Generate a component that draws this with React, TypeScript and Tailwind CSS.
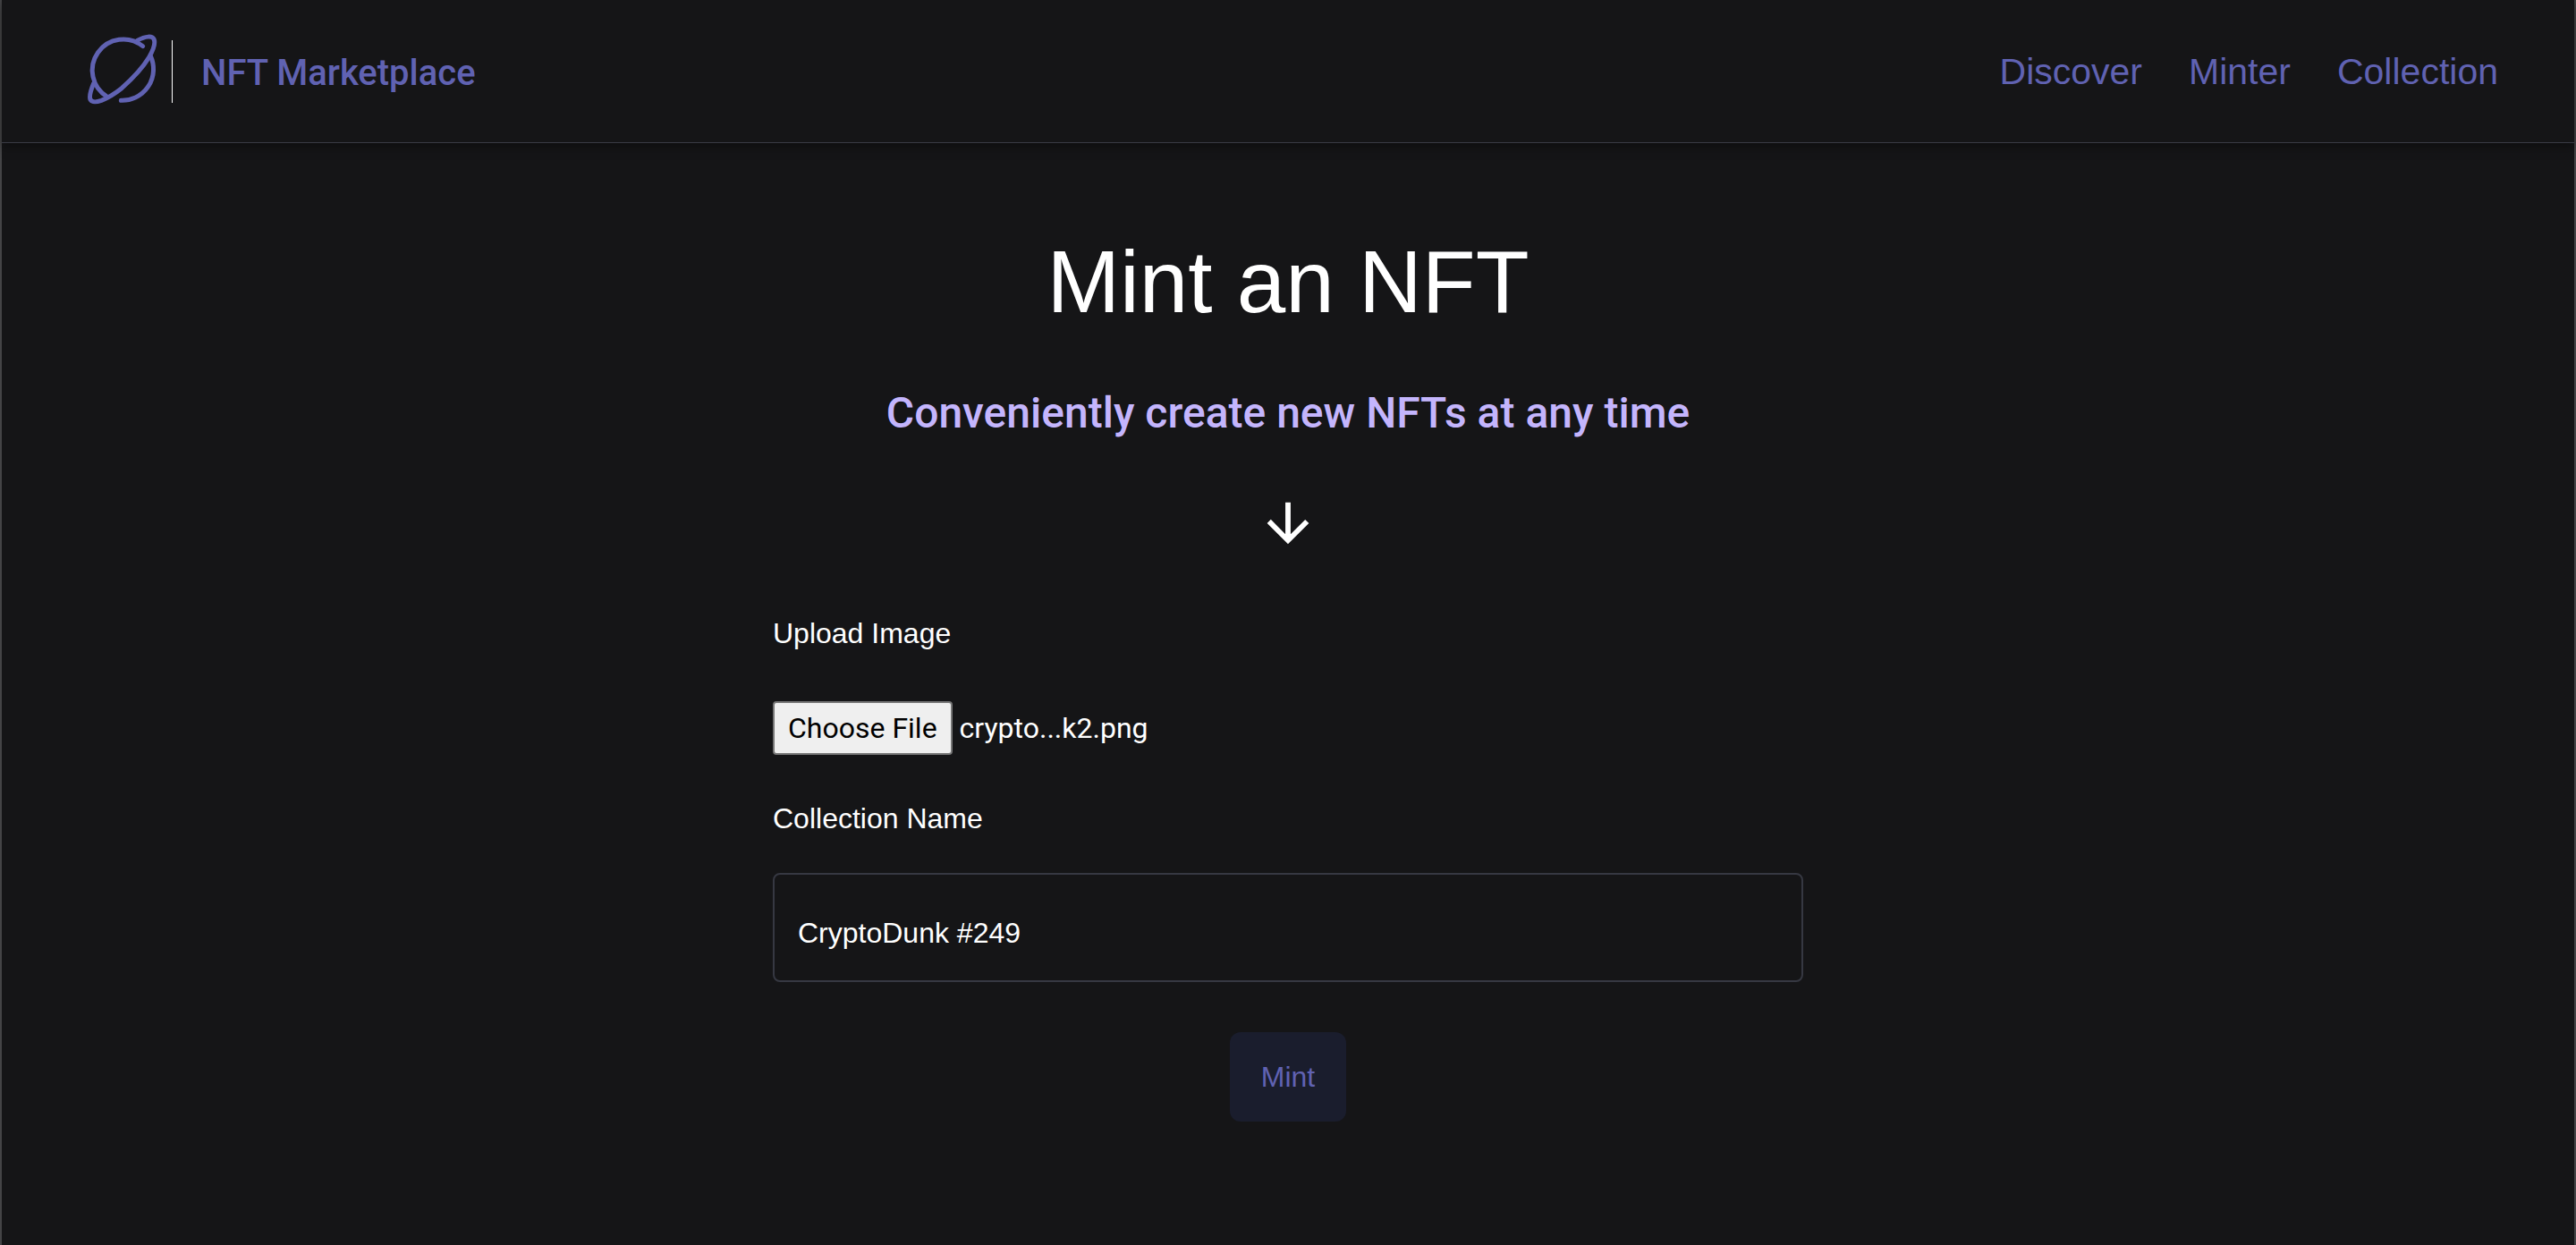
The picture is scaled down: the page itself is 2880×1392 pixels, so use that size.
import { useRef, useState } from "react";

function PlanetLogo() {
  return (
    <svg
      viewBox="50 54 240 240"
      className="mb-1 size-20"
      fill="none"
      stroke="currentColor"
      strokeWidth="15"
      strokeLinecap="round"
      strokeLinejoin="round"
      aria-hidden="true"
    >
      <path d="M241 95A104 104 0 1 0 122 265" />
      <path d="M267 128A105 105 0 0 1 168 277" />
      <path d="M222 76C252 60 272 60 278 71C284 84 276 108 262 132C240 168 205 205 170 236C146 255 122 269 102 277C82 284 70 283 65 274C60 262 66 244 76 220" />
    </svg>
  );
}

function ArrowDown() {
  return (
    <svg viewBox="0 0 24 24" className="size-[70px]" fill="currentColor" aria-hidden="true">
      <path d="M20 12l-1.41-1.41L13 16.17V4h-2v12.17l-5.58-5.59L4 12l8 8 8-8z" />
    </svg>
  );
}

const links = ["Discover", "Minter", "Collection"];

function Header() {
  return (
    <header className="flex h-40 items-center justify-between border-b border-[#3a3b45] pr-[85px] pl-[94px] text-[#6062b2] shadow-[0_4px_12px_rgba(0,0,0,0.4)]">
      <div className="flex items-center">
        <PlanetLogo />
        <div className="ml-4 h-[70px] w-px bg-white" />
        <a href="#home" className="ml-8 pt-1 font-['Roboto'] text-[40px] leading-[56px] font-medium">
          NFT Marketplace
        </a>
      </div>
      <nav className="flex gap-13 text-[41px] leading-[56px]">
        {links.map((name) => (
          <a key={name} href={`#${name.toLowerCase()}`}>
            {name}
          </a>
        ))}
      </nav>
    </header>
  );
}

function MintForm() {
  const fileInput = useRef<HTMLInputElement>(null);
  const [fileName, setFileName] = useState("crypto...k2.png");
  const [name, setName] = useState("CryptoDunk #249");

  return (
    <form
      className="mt-16 flex w-[40vw] flex-col text-[32px] leading-[48px]"
      onSubmit={(event) => event.preventDefault()}
    >
      <label htmlFor="image">Upload Image</label>
      <div className="relative mt-[52px] flex items-center gap-2 font-['Roboto']">
        <input
          ref={fileInput}
          id="image"
          type="file"
          className="sr-only"
          tabIndex={-1}
          onChange={(event) => setFileName(event.target.files?.[0]?.name ?? "No file chosen")}
        />
        <button
          type="button"
          className="h-[60px] rounded border-2 border-[#767676] bg-[#efefef] px-[15px] text-black"
          onClick={() => fileInput.current?.click()}
        >
          Choose File
        </button>
        <span>{fileName}</span>
      </div>
      <label htmlFor="collection" className="mt-[47px]">
        Collection Name
      </label>
      <input
        id="collection"
        type="text"
        value={name}
        onChange={(event) => setName(event.target.value)}
        className="mt-[37px] h-[122px] w-full rounded-lg border-2 border-[#363842] bg-transparent px-[26px] pt-3"
      />
      <button
        type="submit"
        className="mt-14 h-[100px] self-center rounded-xl bg-[#1a1d2d] px-[35px] text-[#6062b2]"
      >
        Mint
      </button>
    </form>
  );
}

export default function App() {
  return (
    <div className="min-h-screen border-x-2 border-[#444446] bg-[#151517] font-['Liberation_Sans',Arial,sans-serif] text-white">
      <Header />
      <main className="flex flex-col items-center pt-[107px]">
        <h1 className="text-[98px] leading-[96px]">Mint an NFT</h1>
        <h2 className="mt-[67px] font-['Roboto'] text-[48px] leading-[64px] font-medium text-[#c4b5fd]">
          Conveniently create new NFTs at any time
        </h2>
        <div className="mt-14">
          <ArrowDown />
        </div>
        <MintForm />
      </main>
    </div>
  );
}
